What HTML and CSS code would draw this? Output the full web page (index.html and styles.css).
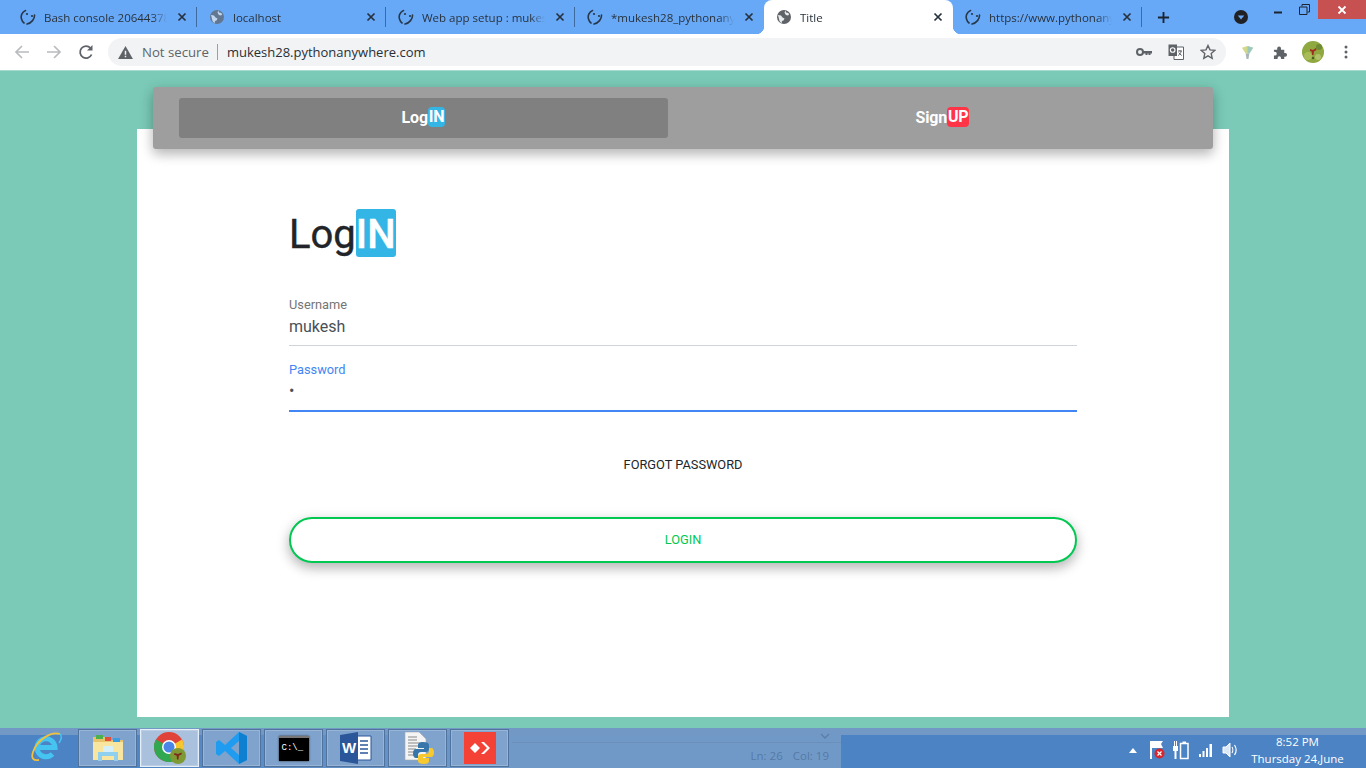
FILE: index.html
```html
<!DOCTYPE html>
<html lang="en-us">
<head>
    <meta charset="utf-8">
    <meta name="viewport" content="width=device-width">
    <title>Title</title>
    <link rel="stylesheet" href="styles.css">
</head>
<body>
    <svg class="defs" width="0" height="0">
        <defs>
            <symbol id="pa" viewBox="0 0 16 16">
                <path d="M5.500 1.500C2 3 .5 7 1.500 10c.4 1.500 1.200 3 2.500 4M14.500 6c.3 4-3 8-7.500 9" fill="none" stroke="#27384a" stroke-width="1.600" stroke-linecap="round"/>
                <circle cx="7" cy="5" r="1.100" fill="#27384a"/>
                <circle cx="12" cy="7" r="1.100" fill="#27384a"/>
            </symbol>
            <symbol id="globe" viewBox="0 0 16 16">
                <circle cx="8" cy="8" r="7" fill="#5f6368"/>
                <path d="M2 6l3 .5 1.500 2 2 1-1 2-1.500.5-.5 2.500-2-2.500zM9.500 1.500l.5 2 2.500.5.500 2-2 .5-1.500-1-1-2z" fill="#e8eaed"/>
            </symbol>
            <symbol id="x" viewBox="0 0 10 10">
                <path d="M1.500 1.500l7 7M8.500 1.500l-7 7" fill="none" stroke="#26313d" stroke-width="1.700"/>
            </symbol>
        </defs>
    </svg>

    <header class="chrome">
        <div class="tabstrip">
            <div class="tab sep">
                <svg class="favicon"><use href="#pa"/></svg>
                <span class="tab-title">Bash console 20644378</span>
                <svg class="tab-x"><use href="#x"/></svg>
            </div>
            <div class="tab sep">
                <svg class="favicon faded"><use href="#globe"/></svg>
                <span class="tab-title">localhost</span>
                <svg class="tab-x"><use href="#x"/></svg>
            </div>
            <div class="tab sep">
                <svg class="favicon"><use href="#pa"/></svg>
                <span class="tab-title">Web app setup : mukes</span>
                <svg class="tab-x"><use href="#x"/></svg>
            </div>
            <div class="tab">
                <svg class="favicon"><use href="#pa"/></svg>
                <span class="tab-title">*mukesh28_pythonany</span>
                <svg class="tab-x"><use href="#x"/></svg>
            </div>
            <div class="tab active">
                <svg class="favicon"><use href="#globe"/></svg>
                <span class="tab-title">Title</span>
                <svg class="tab-x"><use href="#x"/></svg>
            </div>
            <div class="tab sep">
                <svg class="favicon"><use href="#pa"/></svg>
                <span class="tab-title">https://www.pythonany</span>
                <svg class="tab-x"><use href="#x"/></svg>
            </div>
            <svg class="new-tab" viewBox="0 0 14 14"><path d="M7 1v12M1 7h12" stroke="#1b2530" stroke-width="2"/></svg>
            <svg class="tab-search" viewBox="0 0 16 16"><circle cx="8" cy="8" r="7" fill="#202124"/><path d="M4.800 6.500h6.400L8 10.500z" fill="#68a9f7"/></svg>
            <div class="win-btns">
                <svg class="win-min" viewBox="0 0 10 3"><path d="M1 1.500h8" stroke="#1b2530" stroke-width="2"/></svg>
                <svg class="win-max" viewBox="0 0 11 11"><path d="M3 2.500V.5h7.500V8H8.500M.5 3h7.500v7.500H.5z" fill="none" stroke="#1b2530"/></svg>
                <div class="win-close"><svg viewBox="0 0 10 10"><path d="M1.500 1.500l7 7M8.500 1.500l-7 7" stroke="#fff" stroke-width="1.800"/></svg></div>
            </div>
        </div>
        <div class="toolbar">
            <svg class="tool" viewBox="0 0 16 16"><path d="M15 8H2M8 2L2 8l6 6" fill="none" stroke="#b9bbbe" stroke-width="1.700"/></svg>
            <svg class="tool" viewBox="0 0 16 16"><path d="M1 8h13M8 2l6 6-6 6" fill="none" stroke="#b9bbbe" stroke-width="1.700"/></svg>
            <svg class="tool" viewBox="0 0 16 16"><path d="M13.600 10.500A6 6 0 1 1 12.500 4" fill="none" stroke="#5f6368" stroke-width="1.800"/><path d="M14.500 1v5.500H9z" fill="#5f6368"/></svg>
            <div class="omnibox">
                <svg class="warn" viewBox="0 0 16 14"><path d="M8 0l8 14H0z" fill="#5f6368"/><path d="M7.200 5h1.600v4.500H7.200zM7.200 10.500h1.600V12H7.200z" fill="#f1f3f4"/></svg>
                <span class="not-secure">Not secure</span>
                <span class="url">mukesh28.pythonanywhere.com</span>
                <span class="omni-icons">
                    <svg viewBox="0 0 16 10"><circle cx="4" cy="5" r="3" fill="none" stroke="#5f6368" stroke-width="2"/><path d="M7 4h9v2.500h-1.500V8h-2V6.500h-1V8H9.500V6.500H7z" fill="#5f6368"/></svg>
                    <svg viewBox="0 0 16 16"><path d="M6 3h9.500v12.500H6z" fill="#fff" stroke="#5f6368"/><path d="M.5.500h8.500v11.500H.5z" fill="#5f6368"/><circle cx="4.700" cy="6" r="2.300" fill="none" stroke="#fff" stroke-width="1.100"/><path d="M10 7h4M12 6v1M13.200 7c-.4 2-1.500 3.500-3 4.500M10.800 8.500c.6 1.200 1.600 2.200 3 3" fill="none" stroke="#5f6368"/></svg>
                    <svg viewBox="0 0 16 16"><path d="M8 1.500l2 4.400 4.800.5-3.600 3.200 1 4.700L8 11.900l-4.200 2.400 1-4.700L1.200 6.400 6 5.900z" fill="none" stroke="#5f6368" stroke-width="1.400"/></svg>
                </span>
            </div>
            <svg class="ext gem" viewBox="0 0 14 16"><path d="M1 3l6-2 6 2-4 6H5z" fill="#d3d98a"/><path d="M5 9h4l-1 6H6z" fill="#a9b4b8"/><path d="M7 1l6 2-4 6H7z" fill="#9cc9bf"/></svg>
            <svg class="ext puzzle" viewBox="0 0 16 16"><path d="M1 5h3.500V3.500a2 2 0 0 1 4 0V5H12v3.500h1a2 2 0 0 1 0 4h-1V15H8.500v-1.200a1.800 1.800 0 0 0-3.600 0V15H1v-3.800h1a2 2 0 0 0 0-4H1z" fill="#5f6368"/></svg>
            <svg class="avatar" viewBox="0 0 22 22"><circle cx="11" cy="11" r="11" fill="#8fa83f"/><circle cx="6" cy="15" r="4" fill="#a9bc58"/><circle cx="17" cy="6" r="3" fill="#6f8a34"/><circle cx="16" cy="16" r="3" fill="#b3c26a"/><path d="M8 8l3 1 3-2 .5 2-2.500 1.500-.5 3.500h-1.500l-.3-3.500L8 10z" fill="#a32b22"/><circle cx="11" cy="17" r="1.200" fill="#4d5c26"/></svg>
            <svg class="kebab" viewBox="0 0 4 14"><circle cx="2" cy="2" r="1.500" fill="#5f6368"/><circle cx="2" cy="7" r="1.500" fill="#5f6368"/><circle cx="2" cy="12" r="1.500" fill="#5f6368"/></svg>
        </div>
    </header>

    <main class="page">
        <section class="card">
            <nav class="switcher">
                <a class="switch-item current">Log<span class="tag blue">IN</span></a>
                <a class="switch-item">Sign<span class="tag red">UP</span></a>
            </nav>
            <form class="login-form">
                <h1 class="form-title">Log<span class="tag blue">IN</span></h1>
                <div class="field">
                    <label class="field-label">Username</label>
                    <div class="field-value">mukesh</div>
                </div>
                <div class="field focused">
                    <label class="field-label">Password</label>
                    <div class="field-value">•</div>
                </div>
                <div class="forgot">FORGOT PASSWORD</div>
                <button class="login-btn" type="button">LOGIN</button>
            </form>
        </section>
    </main>

    <footer class="taskbar">
        <div class="task-strip">
            <svg class="ie" viewBox="0 0 30 30">
                <path d="M6 15.500h18A9 9 0 1 0 21.500 22" fill="none" stroke="#45c3f1" stroke-width="5"/>
                <path d="M29 2C20-1 6 8 2 20c-2 6 0 9 6 8" fill="none" stroke="#f0c23c" stroke-width="1.800"/>
                <path d="M29 2c2 2 1 6-1 9" fill="none" stroke="#45c3f1" stroke-width="1.500"/>
            </svg>
            <div class="task-btn">
                <svg viewBox="0 0 32 32"><path d="M1 5h12l2 3h16v20H1z" fill="#e9c46a"/><path d="M4 3h7v4H4z" fill="#4caf50"/><path d="M13 5h6v4h-6z" fill="#e0503a"/><path d="M21 6h7v4h-7z" fill="#3d9be0"/><path d="M1 10h30v18H1z" fill="#f8e6a0"/><path d="M6 20h20v9h-4v-5H10v5H6z" fill="#8fd0ee"/><path d="M11 14h10v6H11z" fill="#d6f0fa"/></svg>
            </div>
            <div class="task-btn active">
                <svg viewBox="0 0 32 32"><circle cx="15" cy="15" r="15" fill="#e0433a"/><path d="M15 15L28 7.500A15 15 0 0 1 19 29.500z" fill="#f7c52d"/><path d="M15 15L19 29.500A15 15 0 0 1 2 7.500z" fill="#2fa84f"/><circle cx="15" cy="15" r="7" fill="#fff"/><circle cx="15" cy="15" r="5.500" fill="#4a86e8"/><circle cx="24" cy="24" r="8" fill="#7f9a35"/><path d="M20.500 21l3.500 1 3.500-1.500.3 1.800-3 1.500-.3 3.700h-1.500l-.3-3.700-2.700-1z" fill="#7e2a1c"/></svg>
            </div>
            <div class="task-btn">
                <svg viewBox="0 0 32 32"><path d="M23 0l8 4v24l-8 4-14-13-6 5-3-2v-12l3-2 6 5zM23 9l-8 7 8 7z" fill="#1f9cf0" fill-rule="evenodd"/><path d="M23 0l8 4v24l-8 4z" fill="#0f7fcf"/></svg>
            </div>
            <div class="task-btn">
                <div class="cmd"><span class="cmd-text">C:\_</span></div>
            </div>
            <div class="task-btn">
                <svg viewBox="0 0 32 32"><path d="M17 4h14v24H17z" fill="#fff" stroke="#2b579a"/><path d="M20 9h8M20 13h8M20 17h8M20 21h8" stroke="#2b579a" stroke-width="1.500"/><path d="M0 3l18-3v32L0 29z" fill="#2b579a"/><text x="9" y="21" class="word-w">W</text></svg>
            </div>
            <div class="task-btn">
                <svg viewBox="0 0 32 32"><path d="M3 0h14l7 7v21H3z" fill="#f4f4f4" stroke="#aaa" stroke-width=".6"/><path d="M6 5h9M6 8h9M6 11h12M6 14h12M6 17h8M6 20h8M6 23h8" stroke="#888"/><path d="M21 10c-4 0-5 1.500-5 3v3h6v1h-8c-2 0-3 2-3 4.500s1 4.500 3 4.500h2v-3c0-2 1.500-3 3-3h5c1.500 0 3-1 3-3v-4c0-1.800-2-3-6-3z" fill="#3776ab"/><path d="M22 32c4 0 5-1.500 5-3v-3h-6v-1h8c2 0 3-2 3-4.500s-1-4.500-3-4.500h-2v3c0 2-1.500 3-3 3h-5c-1.500 0-3 1-3 3v4c0 1.800 2 3 6 3z" fill="#f7c92f"/></svg>
            </div>
            <div class="task-btn">
                <svg viewBox="0 0 32 32"><path d="M0 0h32v32H0z" fill="#f44336"/><path d="M6 16l5-5 5 5-5 5zM17 10h3l6 6-6 6h-3l6-6z" fill="#fff"/></svg>
            </div>
            <div class="editor-status">
                <svg class="status-chev" viewBox="0 0 10 6"><path d="M1 1l4 4 4-4" fill="none" stroke="#5b7ea8" stroke-width="1.300"/></svg>
                <span class="status-text">Ln: 26</span>
                <span class="status-text">Col: 19</span>
            </div>
        </div>
        <div class="tray">
            <svg class="tray-up" viewBox="0 0 8 5"><path d="M4 0l4 5H0z" fill="#fff"/></svg>
            <svg class="tray-icon" viewBox="0 0 16 20"><path d="M2 1h12l-2 3 2 4H3v11H1V1z" fill="#fff"/><circle cx="10.500" cy="13.500" r="5" fill="#d8262c"/><path d="M8.500 11.500l4 4M12.500 11.500l-4 4" stroke="#fff" stroke-width="1.200"/></svg>
            <svg class="tray-icon" viewBox="0 0 16 20"><path d="M0 6h5v5H3.500v8h-2v-8H0zM1 1h1v5H1zM3 1h1v5H3z" fill="#fff"/><path d="M7.500 3.500h7.500v15H7.500z" fill="none" stroke="#fff" stroke-width="1.500"/><path d="M9.500 1.500h3.500v2H9.500z" fill="#fff"/></svg>
            <svg class="tray-icon" viewBox="0 0 16 20"><path d="M1 14h2v3H1zM4.500 11h2v6h-2zM8 8h2v9H8zM11.500 4h2.500v13h-2.500z" fill="#fff"/></svg>
            <svg class="tray-icon" viewBox="0 0 16 20"><path d="M1 7h3l4-4v14l-4-4H1z" fill="#dce8f5" stroke="#fff"/><path d="M10 7c1 1.500 1 4.500 0 6M12.500 5c2 3 2 7 0 10" fill="none" stroke="#fff" stroke-width="1.200"/></svg>
            <div class="clock">
                <span>8:52 PM</span>
                <span>Thursday 24,June</span>
            </div>
        </div>
    </footer>
</body>
</html>
```

FILE: styles.css
```css
* {
    box-sizing: border-box;
}

html, body {
    margin: 0;
    height: 768px;
    overflow: hidden;
}

body {
    display: flex;
    flex-direction: column;
    font-family: Roboto, sans-serif;
    background-color: #7acab7;
}

.defs {
    position: absolute;
}

/* browser chrome */
.chrome {
    height: 71px;
    flex: none;
    background-color: #fff;
}

.tabstrip {
    display: flex;
    align-items: center;
    height: 34px;
    padding-left: 8px;
    background-color: #68a9f7;
    font-family: "Open Sans", sans-serif;
}

.tab {
    position: relative;
    display: flex;
    align-items: center;
    width: 189px;
    height: 34px;
    padding: 0 10px 0 12px;
    font-size: 11.500px;
    color: #28323d;
}

.tab.sep::after {
    content: "";
    position: absolute;
    right: 0;
    top: 7px;
    height: 20px;
    border-right: 1px solid #3f6a9e;
}

.tab.active {
    background-color: #fff;
    border-radius: 8px 8px 0 0;
}

.tab.active::before,
.tab.active::after {
    content: "";
    position: absolute;
    bottom: 0;
    width: 8px;
    height: 8px;
}

.tab.active::before {
    left: -8px;
    background: radial-gradient(circle at 0 0, #68a9f7 8px, #fff 8.500px);
}

.tab.active::after {
    right: -8px;
    background: radial-gradient(circle at 100% 0, #68a9f7 8px, #fff 8.500px);
}

.favicon {
    flex: none;
    width: 16px;
    height: 16px;
    margin-right: 8px;
}

.faded {
    opacity: .7;
}

.tab-title {
    flex: 1;
    min-width: 0;
    white-space: nowrap;
    -webkit-mask-image: linear-gradient(to right, #000 88%, transparent);
    mask-image: linear-gradient(to right, #000 88%, transparent);
}

.tab-x {
    flex: none;
    width: 10px;
    height: 10px;
    margin-left: 10px;
}

.new-tab {
    width: 13px;
    height: 13px;
    margin-left: 15px;
}

.tab-search {
    width: 16px;
    height: 16px;
    margin-left: 63px;
}

.win-btns {
    display: flex;
    align-self: flex-start;
    margin-left: auto;
}

.win-min {
    width: 10px;
    height: 3px;
    margin: 11px 0 0 0;
}

.win-max {
    width: 11px;
    height: 11px;
    margin: 4px 8px 0 16px;
}

.win-close {
    display: flex;
    align-items: center;
    justify-content: center;
    width: 48px;
    height: 19px;
    background-color: #c75050;
}

.win-close svg {
    width: 10px;
    height: 10px;
}

.toolbar {
    display: flex;
    align-items: center;
    height: 37px;
    padding-left: 14px;
    border-bottom: 1px solid #a8d9cd;
}

.tool {
    width: 16px;
    height: 16px;
    margin-right: 16px;
}

.omnibox {
    display: flex;
    align-items: center;
    width: 1118px;
    height: 28px;
    margin-left: -2px;
    padding: 0 10px;
    border-radius: 14px;
    background-color: #f1f3f4;
    font-family: "Open Sans", sans-serif;
}

.warn {
    width: 15px;
    height: 13px;
    margin-right: 9px;
}

.not-secure {
    padding-right: 8px;
    border-right: 1px solid #9aa0a6;
    font-size: 13.200px;
    line-height: 16px;
    color: #5f6368;
}

.url {
    margin-left: 9px;
    font-size: 13px;
    color: #2a2f36;
}

.omni-icons {
    display: flex;
    align-items: center;
    gap: 16px;
    margin-left: auto;
}

.omni-icons svg {
    width: 16px;
    height: 16px;
}

.ext {
    width: 15px;
    height: 15px;
}

.gem {
    margin-left: 14px;
}

.puzzle {
    margin-left: 18px;
}

.avatar {
    width: 22px;
    height: 22px;
    margin-left: 14px;
}

.kebab {
    width: 4px;
    height: 14px;
    margin-left: 20px;
}

/* page */
.page {
    flex: 1;
    padding: 58px 137px 11px;
}

.card {
    height: 588px;
    background-color: #fff;
}

.switcher {
    display: flex;
    gap: 30px;
    height: 62px;
    margin: 0 16px;
    padding: 11px 26px 11px;
    position: relative;
    top: -42px;
    border-radius: 3px;
    background-color: #9e9e9e;
    box-shadow: 0 5px 11px rgba(0, 0, 0, .18), 0 4px 15px rgba(0, 0, 0, .15);
}

.switch-item {
    display: flex;
    align-items: center;
    justify-content: center;
    flex: 1;
    height: 40px;
    padding-bottom: 2px;
    border-radius: 3px;
    font-size: 16px;
    font-weight: 700;
    letter-spacing: -.2px;
    color: #fff;
}

.switch-item.current {
    background-color: #808080;
}

.switch-item .tag {
    padding: 0 1px;
    border-radius: 4px;
    line-height: 20px;
}

.tag.blue {
    background-color: #33b5e5;
    color: #fff;
}

.tag.red {
    background-color: #ff3547;
    color: #fff;
}

.login-form {
    display: flex;
    flex-direction: column;
    width: 788px;
    margin: 0 0 0 152px;
    padding-top: 18px;
}

.form-title {
    height: 48px;
    margin: 0 0 28px;
    font-size: 40px;
    font-weight: 400;
    line-height: 52px;
    color: #212529;
    -webkit-text-stroke: .4px #212529;
}

.form-title .tag {
    display: inline-block;
    height: 48px;
    font-weight: 500;
    border-radius: 3px;
    -webkit-text-stroke: .4px #fff;
}

.field {
    height: 61px;
    border-bottom: 1px solid #ced4da;
    margin-bottom: 1px;
}

.field-label {
    display: block;
    padding-top: 13px;
    font-size: 12.800px;
    line-height: 14px;
    color: #757575;
}

.field-value {
    margin-top: 4px;
    font-size: 16px;
    line-height: 22px;
    color: #495057;
}

.field.focused {
    height: 65px;
    border-bottom: 2px solid #4285f4;
}

.field.focused .field-label {
    padding-top: 16px;
    color: #4285f4;
}

.field.focused .field-value {
    margin-top: 3px;
}

.forgot {
    margin-top: 44px;
    font-size: 12.800px;
    line-height: 16px;
    text-align: center;
    color: #212529;
}

.login-btn {
    height: 46px;
    margin-top: 44px;
    padding: 0 0 2px;
    border: 2px solid #00c851;
    border-radius: 23px;
    background-color: #fff;
    box-shadow: 0 5px 11px rgba(0, 0, 0, .18), 0 4px 15px rgba(0, 0, 0, .15);
    font-family: Roboto, sans-serif;
    font-size: 12.800px;
    color: #00c851;
}

/* windows taskbar */
.taskbar {
    display: flex;
    flex: none;
    height: 40px;
    background: linear-gradient(#7299c5, #7299c5) top / 100% 7px no-repeat, #4b83c4;
}

.task-strip {
    display: flex;
    align-items: center;
    gap: 3px;
    width: 841px;
    padding-left: 78px;
    background: linear-gradient(#7299c5, #7299c5) top / 100% 7px no-repeat,
        linear-gradient(to right, #4b83c4 78px, #7099c8 510px);
    position: relative;
}

.ie {
    position: absolute;
    left: 31px;
    top: 4px;
    width: 30px;
    height: 30px;
    overflow: visible;
}

.task-btn {
    display: flex;
    align-items: center;
    justify-content: center;
    flex: none;
    width: 59px;
    height: 38px;
    border: 1px solid #4f739c;
    box-shadow: inset 0 0 0 1px rgba(255, 255, 255, .2);
    background-color: #7fa3cc;
}

.task-btn.active {
    border-color: #e6eef6;
    background-color: #a9c1dc;
}

.task-btn svg {
    width: 32px;
    height: 32px;
}

.cmd {
    width: 30px;
    height: 25px;
    padding: 5px 0 0 3px;
    border-top: 2px solid #777;
    background-color: #000;
    box-shadow: 0 0 2px #333;
}

.cmd-text {
    display: block;
    font-family: "Liberation Mono", monospace;
    font-size: 9px;
    line-height: 10px;
    color: #fff;
}

.word-w {
    font-family: "Liberation Sans", sans-serif;
    font-size: 15px;
    font-weight: 700;
    text-anchor: middle;
    fill: #fff;
}

.editor-status {
    display: flex;
    flex: 1;
    align-self: flex-end;
    align-items: center;
    justify-content: flex-end;
    gap: 10px;
    height: 26px;
    padding-right: 12px;
    border-top: 1px solid #6a8fbb;
    position: relative;
}

.status-chev {
    position: absolute;
    right: 11px;
    top: -10px;
    width: 10px;
    height: 6px;
}

.status-text {
    font-family: "Open Sans", sans-serif;
    font-size: 11.500px;
    color: #557aa5;
}

.tray {
    display: flex;
    align-items: center;
    flex: 1;
    padding: 4px 0 0 288px;
}

.tray-up {
    width: 8px;
    height: 5px;
    margin-right: 12px;
}

.tray-icon {
    width: 16px;
    height: 20px;
    margin-right: 8.300px;
}

.clock {
    display: flex;
    flex-direction: column;
    align-items: center;
    gap: 2px;
    margin-left: 5px;
    font-family: "Open Sans", sans-serif;
    font-size: 11.500px;
    line-height: 15px;
    color: #fff;
}
```
